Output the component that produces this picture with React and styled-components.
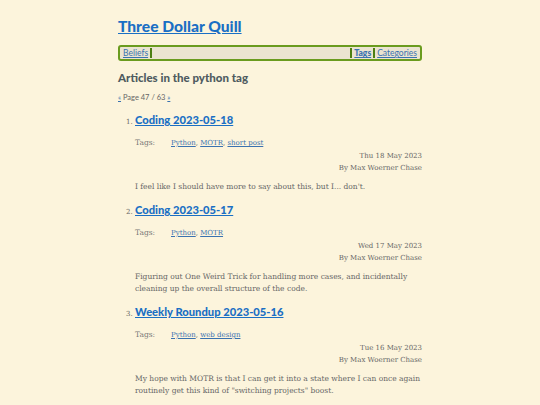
import React from 'react';
import styled, { createGlobalStyle } from 'styled-components';

const Global = createGlobalStyle`
  html, body {
    margin: 0;
    padding: 0;
    background: #fcf4dc;
  }
  body {
    font-family: "DejaVu Serif", "Liberation Serif", serif;
    color: #555;
  }
`

const Page = styled.div`
  width: 304px;
  margin: 0 auto;
  padding-top: 16px;
`
const SiteTitle = styled.a`
  display: block;
  font-family: Lato, "Open Sans", sans-serif;
  font-weight: 900;
  font-size: 15.6px;
  line-height: 20px;
  color: #1a6fc4;
  text-decoration: underline;
`
const Nav = styled.nav`
  margin-top: 9px;
  height: 12px;
  border: 2px solid #6a9b1e;
  border-radius: 3px;
  background: #ebe4d0;
  display: flex;
  align-items: center;
  padding: 0 2px;
  font-family: Lato, "Open Sans", sans-serif;
  font-size: 8.5px;
`
const NavLink = styled.a`
  color: #3a72b0;
  text-decoration: underline;
  font-weight: ${p => (p.$active ? 900 : 400)};
  padding: 0 1px;
`
const Bar = styled.span`
  width: 2px;
  height: 10px;
  background: #4d7f12;
  margin: 0 1px;
`
const Spacer = styled.span`
  flex: 1;
`
const Heading = styled.h1`
  margin: 9px 0 0;
  font-family: Lato, "Open Sans", sans-serif;
  font-size: 11.5px;
  line-height: 16px;
  font-weight: 900;
  color: #4e5b60;
`
const Pager = styled.div`
  margin-top: 7px;
  font-family: Lato, "Open Sans", sans-serif;
  font-size: 7.5px;
  color: #666;
  a {
    color: #3a72b0;
    font-size: 7px;
  }
`
const List = styled.ol`
  margin: 7px 0 0;
  padding-left: 17px;
  font-size: 7px;
`
const Item = styled.li`
  margin-bottom: 6px;
  color: #666;
  &::marker {
    font-size: 7px;
  }
`
const ItemTitle = styled.a`
  font-family: Lato, "Open Sans", sans-serif;
  font-size: 11.2px;
  line-height: 22px;
  font-weight: 900;
  color: #1a6fc4;
  text-decoration: underline;
`
const TagRow = styled.div`
  display: flex;
  margin-top: 6px;
  font-size: 7px;
  line-height: 12px;
`
const TagLabel = styled.span`
  width: 36px;
  font-size: 7.5px;
  color: #777;
`
const TagLink = styled.a`
  color: #3a72b0;
  text-decoration: underline;
`
const Meta = styled.div`
  margin-top: ${p => (p.$first ? '1px' : '0')};
  text-align: right;
  font-size: 7px;
  line-height: 12px;
  color: #666;
`
const Summary = styled.p`
  margin: 7px 0 0;
  font-size: 7.5px;
  line-height: 12px;
  color: #666;
`

const articles = [
  {
    title: 'Coding 2023-05-18',
    tags: ['Python', 'MOTR', 'short post'],
    date: 'Thu 18 May 2023',
    summary: "I feel like I should have more to say about this, but I... don't.",
  },
  {
    title: 'Coding 2023-05-17',
    tags: ['Python', 'MOTR'],
    date: 'Wed 17 May 2023',
    summary: 'Figuring out One Weird Trick for handling more cases, and incidentally cleaning up the overall structure of the code.',
  },
  {
    title: 'Weekly Roundup 2023-05-16',
    tags: ['Python', 'web design'],
    date: 'Tue 16 May 2023',
    summary: 'My hope with MOTR is that I can get it into a state where I can once again routinely get this kind of "switching projects" boost.',
  },
]

export default function App() {
  return (
    <Page>
      <Global />
      <SiteTitle href="#">Three Dollar Quill</SiteTitle>
      <Nav>
        <NavLink href="#">Beliefs</NavLink>
        <Bar />
        <Spacer />
        <Bar />
        <NavLink href="#" $active>Tags</NavLink>
        <Bar />
        <NavLink href="#">Categories</NavLink>
      </Nav>
      <Heading>Articles in the python tag</Heading>
      <Pager>
        <a href="#">«</a> Page 47 / 63 <a href="#">»</a>
      </Pager>
      <List>
        {articles.map(a => (
          <Item key={a.title}>
            <ItemTitle href="#">{a.title}</ItemTitle>
            <TagRow>
              <TagLabel>Tags:</TagLabel>
              <span>
                {a.tags.map((t, i) => (
                  <React.Fragment key={t}>
                    {i > 0 && ', '}
                    <TagLink href="#">{t}</TagLink>
                  </React.Fragment>
                ))}
              </span>
            </TagRow>
            <Meta $first>{a.date}</Meta>
            <Meta>By Max Woerner Chase</Meta>
            <Summary>{a.summary}</Summary>
          </Item>
        ))}
      </List>
    </Page>
  )
}
